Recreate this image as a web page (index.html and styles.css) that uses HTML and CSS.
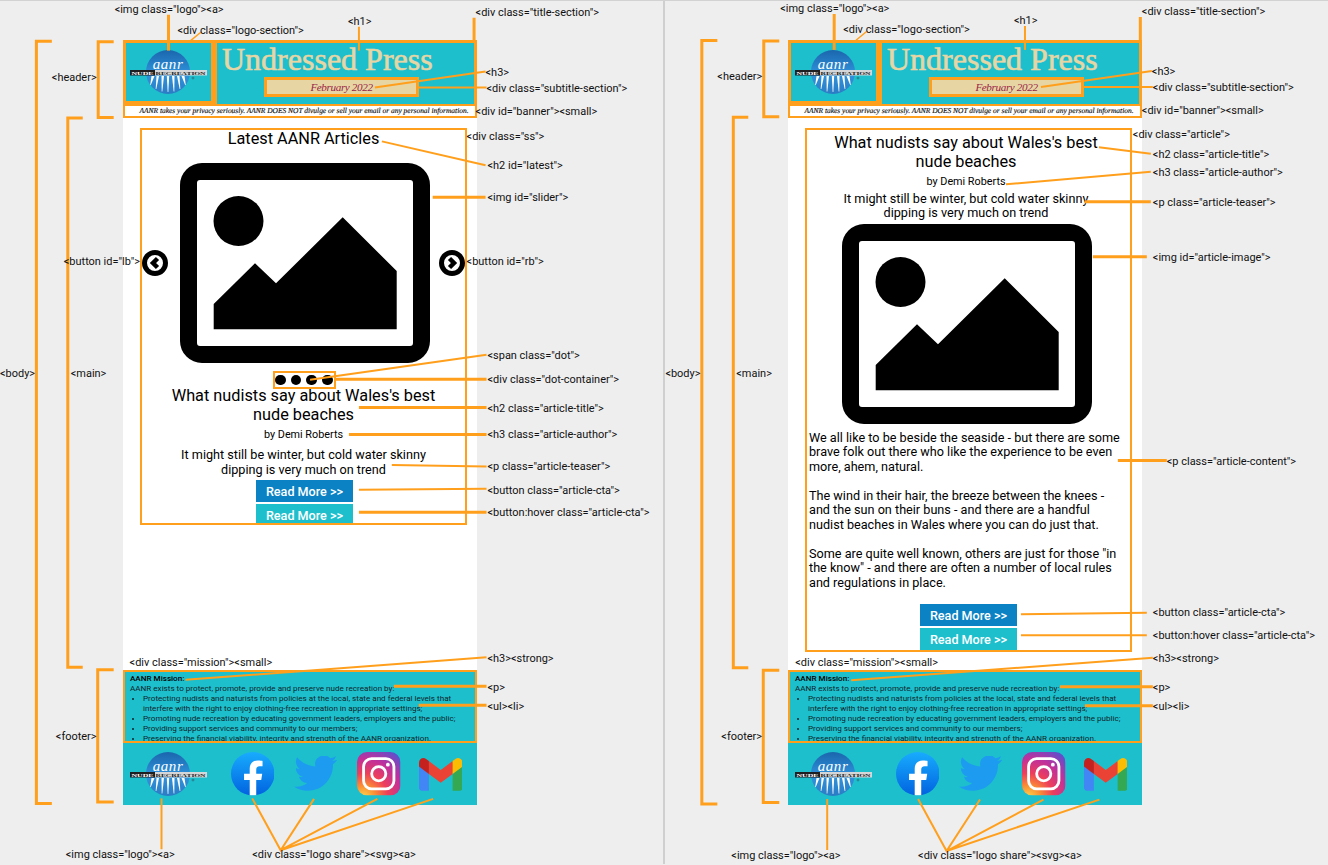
FILE: index.html
```html
<!DOCTYPE html>
<html lang="en">
<head>
<meta charset="utf-8">
<title>Undressed Press wireframes</title>
<link rel="stylesheet" href="styles.css">
</head>
<body>
<svg class="defs" aria-hidden="true">
  <defs>
    <linearGradient id="g-logo" x1="0" y1="0" x2="0" y2="1">
      <stop offset="0" stop-color="#1b66ad"/><stop offset=".55" stop-color="#2f93dc"/><stop offset="1" stop-color="#2a7cc4"/>
    </linearGradient>
    <linearGradient id="g-fb" x1="0" y1="0" x2="0" y2="1">
      <stop offset="0" stop-color="#18acfe"/><stop offset="1" stop-color="#0163e0"/>
    </linearGradient>
    <radialGradient id="g-ig" cx=".15" cy="1.05" r="1.25">
      <stop offset="0" stop-color="#fdd74e"/><stop offset=".22" stop-color="#fb8f34"/><stop offset=".45" stop-color="#ee3f5a"/><stop offset=".72" stop-color="#c0309c"/><stop offset="1" stop-color="#5b51cd"/>
    </radialGradient>
  </defs>
  <symbol id="i-photo" viewBox="0 0 250 200">
    <path fill-rule="evenodd" d="M22 0H228A22 22 0 0 1 250 22V178A22 22 0 0 1 228 200H22A22 22 0 0 1 0 178V22A22 22 0 0 1 22 0ZM20 17A3 3 0 0 0 17 20V180A3 3 0 0 0 20 183H230A3 3 0 0 0 233 180V20A3 3 0 0 0 230 17Z"/>
    <circle cx="58.5" cy="58" r="25"/>
    <path d="M33.700 141L75 100.300L96 120.300L162.700 54.300L216.700 108V166.300H33.700Z"/>
  </symbol>
  <symbol id="i-left" viewBox="0 0 26 26">
    <circle cx="13" cy="13" r="10.500" fill="#fff" stroke="#000" stroke-width="5"/>
    <path d="M15.500 8.500L11 13L15.500 17.500" fill="none" stroke="#000" stroke-width="4.500"/>
  </symbol>
  <symbol id="i-right" viewBox="0 0 26 26">
    <circle cx="13" cy="13" r="10.500" fill="#fff" stroke="#000" stroke-width="5"/>
    <path d="M10.500 8.500L15 13L10.500 17.500" fill="none" stroke="#000" stroke-width="4.500"/>
  </symbol>
  <symbol id="i-logo-art" viewBox="0 0 77 46">
    <circle cx="38" cy="23" r="22" fill="url(#g-logo)"/>
    <g fill="#fff">
      <path d="M36.800 27H39.200L38.300 43H37.700Z"/>
      <path d="M31.500 27H34L32.300 42.500H31.700Z"/>
      <path d="M42 27H44.500L44.300 42.500H43.700Z"/>
      <path d="M26.500 27H29L26.300 40H25.700Z"/>
      <path d="M47 27H49.500L50.300 40H49.700Z"/>
      <path d="M21.500 27H24.500L20.800 36H20.200Z"/>
      <path d="M51.500 27H54.500L55.800 36H55.200Z"/>
    </g>
    <rect x="0" y="21" width="25" height="5.500" fill="#1f1f22"/>
    <rect x="25" y="21" width="52" height="5.500" fill="#d4d6d8"/>
    <circle cx="63" cy="29" r="1" fill="none" stroke="#345" stroke-width=".5"/>
  </symbol>
  <symbol id="i-fb" viewBox="0 0 40 40">
    <circle cx="20" cy="20" r="20" fill="url(#g-fb)"/>
    <path fill="#fff" d="M27.800 25.800L28.700 20H23.200V16.300C23.200 14.700 24 13.200 26.400 13.200H29V8.200S26.700 7.800 24.600 7.800C20.100 7.800 17.200 10.500 17.200 15.400V20H12V25.800H17.200V39.800Q20 40.200 23.200 39.800V25.800Z"/>
  </symbol>
  <symbol id="i-tw" viewBox="0 0 24 20">
    <path fill="#1d9bf0" transform="translate(0 -2.500)" d="M23.953 4.570a10 10 0 0 1-2.825.775 4.958 4.958 0 0 0 2.163-2.723c-.951.555-2.005.959-3.127 1.184a4.920 4.920 0 0 0-8.384 4.482C7.690 8.095 4.067 6.130 1.640 3.162a4.822 4.822 0 0 0-.666 2.475c0 1.710.870 3.213 2.188 4.096a4.904 4.904 0 0 1-2.228-.616v.060a4.923 4.923 0 0 0 3.946 4.827 4.996 4.996 0 0 1-2.212.085 4.936 4.936 0 0 0 4.604 3.417 9.867 9.867 0 0 1-6.102 2.105c-.390 0-.779-.023-1.170-.067a13.995 13.995 0 0 0 7.557 2.209c9.053 0 13.998-7.496 13.998-13.985 0-.210 0-.420-.015-.630A9.935 9.935 0 0 0 24 4.590z"/>
  </symbol>
  <symbol id="i-ig" viewBox="0 0 43 43">
    <rect width="43" height="43" rx="10" fill="url(#g-ig)"/>
    <rect x="6.500" y="6.500" width="30" height="30" rx="8" fill="none" stroke="#fff" stroke-width="2.800"/>
    <circle cx="21.500" cy="21.500" r="7" fill="none" stroke="#fff" stroke-width="2.800"/>
    <circle cx="30.500" cy="12.500" r="1.900" fill="#fff"/>
  </symbol>
  <symbol id="i-gm" viewBox="0 0 256 193">
    <path fill="#4285F4" d="M58.182 192.050V93.140L27.507 65.077 0 49.504v125.091c0 9.658 7.825 17.455 17.455 17.455h40.727Z"/>
    <path fill="#34A853" d="M197.818 192.050h40.727c9.659 0 17.455-7.826 17.455-17.455V49.505l-31.156 17.837-27.026 25.798v98.910Z"/>
    <path fill="#EA4335" d="m58.182 93.140-4.174-38.647 4.174-36.989L128 69.868l69.818-52.364 4.669 34.992-4.669 40.644L128 145.504z"/>
    <path fill="#FBBC04" d="M197.818 17.504V93.140L256 49.504V26.231c0-21.585-24.640-33.890-41.890-20.945l-16.292 12.218Z"/>
    <path fill="#C5221F" d="m0 49.504 26.759 20.070L58.182 93.140V17.504L41.890 5.286C24.610-7.660 0 4.646 0 26.230v23.273Z"/>
  </symbol>
</svg>

<div class="stage">

  <section class="panel panel-first">
    <div class="page">
      <header class="site-header">
        <div class="top">
          <div class="logo-section">
            <svg class="logo" viewBox="0 0 77 46"><use href="#i-logo-art" width="77" height="46"/><text class="logo-word" x="38" y="19.500" text-anchor="middle">aanr</text><text class="logo-band logo-band-light" x="1.500" y="25.600" textLength="22" lengthAdjust="spacingAndGlyphs">NUDE</text><text class="logo-band" x="25.500" y="25.600" textLength="50" lengthAdjust="spacingAndGlyphs">RECREATION</text></svg>
          </div>
          <div class="title-section">
            <h1>Undressed Press</h1>
            <div class="subtitle-section"><h3>February 2022</h3></div>
          </div>
        </div>
        <div class="banner"><small>AANR takes your privacy seriously. AANR DOES NOT divulge or sell your email or any personal information.</small></div>
      </header>
      <main class="main">
        <div class="card card-ss">
          <h2 class="latest">Latest AANR Articles</h2>
          <div class="slider">
            <svg class="round-btn"><use href="#i-left"/></svg>
            <svg class="photo photo-slider"><use href="#i-photo"/></svg>
            <svg class="round-btn"><use href="#i-right"/></svg>
          </div>
          <div class="dot-row"><div class="dot-container"><span class="dot"></span><span class="dot"></span><span class="dot"></span><span class="dot"></span></div></div>
          <h2 class="article-title article-title-tight">What nudists say about Wales's best nude beaches</h2>
          <h3 class="article-author">by Demi Roberts</h3>
          <p class="article-teaser teaser-loose">It might still be winter, but cold water skinny dipping is very much on trend</p>
          <div class="cta-stack cta-stack-tight">
            <button class="article-cta">Read More &gt;&gt;</button>
            <button class="article-cta article-cta-hover">Read More &gt;&gt;</button>
          </div>
        </div>
      </main>
      <footer class="site-footer">
        <div class="mission">
          <h3><strong>AANR Mission:</strong></h3>
          <p>AANR exists to protect, promote, provide and preserve nude recreation by:</p>
          <ul>
            <li>Protecting nudists and naturists from policies at the local, state and federal levels that interfere with the right to enjoy clothing-free recreation in appropriate settings;</li>
            <li>Promoting nude recreation by educating government leaders, employers and the public;</li>
            <li>Providing support services and community to our members;</li>
            <li>Preserving the financial viability, integrity and strength of the AANR organization.</li>
          </ul>
        </div>
        <div class="share-row">
          <svg class="logo logo-foot" viewBox="0 0 77 46"><use href="#i-logo-art" width="77" height="46"/><text class="logo-word" x="38" y="19.500" text-anchor="middle">aanr</text><text class="logo-band logo-band-light" x="1.500" y="25.600" textLength="22" lengthAdjust="spacingAndGlyphs">NUDE</text><text class="logo-band" x="25.500" y="25.600" textLength="50" lengthAdjust="spacingAndGlyphs">RECREATION</text></svg>
          <svg class="share"><use href="#i-fb"/></svg>
          <svg class="share share-tw"><use href="#i-tw"/></svg>
          <svg class="share"><use href="#i-ig"/></svg>
          <svg class="share share-gm"><use href="#i-gm"/></svg>
        </div>
      </footer>
    </div>

    <svg class="notes" viewBox="0 0 665 865">
      <g class="br">
        <path d="M52 40.500H36.500V805H52"/>
        <path d="M83 117.500H68V668.500H83"/>
        <path d="M114 41H98.500V117H114"/>
        <path d="M114 671H98V803.500H114"/>
      </g>
      <g class="ln">
        <path d="M169 14V50"/>
        <path class="thin" d="M190 41L202 31"/>
        <path class="mid" d="M360 26V50"/>
        <path d="M475.500 17V41"/>
        <path class="mid" d="M376 87L487 71"/>
        <path class="mid" d="M419 87H488"/>
        <path class="mid" d="M383 141L487 165"/>
        <path d="M434 197H487"/>
        <path class="mid" d="M311 380L488 355"/>
        <path d="M336 379.500H488"/>
        <path d="M360 408H488"/>
        <path d="M350 435H488"/>
        <path class="mid" d="M393 465.700L488 467"/>
        <path class="mid" d="M360 490.500L488 489.500"/>
        <path d="M360 513H488"/>
        <path class="mid" d="M186 681L488 658.500"/>
        <path d="M395 687.500H488"/>
        <path d="M420 706.500H488"/>
        <path class="mid" d="M162 800V851"/>
        <path class="mid" d="M253 800L281.500 852L315 800.500M281.500 852L378.500 800.500M281.500 852L434.500 800.500"/>
      </g>
      <g class="tx">
        <text x="115" y="8">&lt;img class="logo"&gt;&lt;a&gt;</text>
        <text x="178" y="29">&lt;div class="logo-section"&gt;</text>
        <text x="349" y="20">&lt;h1&gt;</text>
        <text x="477" y="11">&lt;div class="title-section"&gt;</text>
        <text x="52" y="76">&lt;header&gt;</text>
        <text x="487" y="71">&lt;h3&gt;</text>
        <text x="488" y="87">&lt;div class="subtitle-section"&gt;</text>
        <text x="477" y="110">&lt;div id="banner"&gt;&lt;small&gt;</text>
        <text x="468" y="135">&lt;div class="ss"&gt;</text>
        <text x="489" y="165">&lt;h2 id="latest"&gt;</text>
        <text x="489" y="197">&lt;img id="slider"&gt;</text>
        <text x="64" y="261">&lt;button id="lb"&gt;</text>
        <text x="468" y="261">&lt;button id="rb"&gt;</text>
        <text x="489" y="355">&lt;span class="dot"&gt;</text>
        <text x="489" y="379">&lt;div class="dot-container"&gt;</text>
        <text x="489" y="408">&lt;h2 class="article-title"&gt;</text>
        <text x="489" y="434">&lt;h3 class="article-author"&gt;</text>
        <text x="489" y="466">&lt;p class="article-teaser"&gt;</text>
        <text x="489" y="490">&lt;button class="article-cta"&gt;</text>
        <text x="489" y="513">&lt;button:hover class="article-cta"&gt;</text>
        <text x="0" y="373">&lt;body&gt;</text>
        <text x="71" y="373">&lt;main&gt;</text>
        <text x="56" y="737">&lt;footer&gt;</text>
        <text x="130" y="663">&lt;div class="mission"&gt;&lt;small&gt;</text>
        <text x="489" y="659">&lt;h3&gt;&lt;strong&gt;</text>
        <text x="489" y="688">&lt;p&gt;</text>
        <text x="489" y="707">&lt;ul&gt;&lt;li&gt;</text>
        <text x="66" y="856">&lt;img class="logo"&gt;&lt;a&gt;</text>
        <text x="253" y="856">&lt;div class="logo share"&gt;&lt;svg&gt;&lt;a&gt;</text>
      </g>
    </svg>
  </section>

  <section class="panel">
    <div class="page">
      <header class="site-header">
        <div class="top">
          <div class="logo-section">
            <svg class="logo" viewBox="0 0 77 46"><use href="#i-logo-art" width="77" height="46"/><text class="logo-word" x="38" y="19.500" text-anchor="middle">aanr</text><text class="logo-band logo-band-light" x="1.500" y="25.600" textLength="22" lengthAdjust="spacingAndGlyphs">NUDE</text><text class="logo-band" x="25.500" y="25.600" textLength="50" lengthAdjust="spacingAndGlyphs">RECREATION</text></svg>
          </div>
          <div class="title-section">
            <h1>Undressed Press</h1>
            <div class="subtitle-section"><h3>February 2022</h3></div>
          </div>
        </div>
        <div class="banner"><small>AANR takes your privacy seriously. AANR DOES NOT divulge or sell your email or any personal information.</small></div>
      </header>
      <main class="main">
        <div class="card">
          <h2 class="article-title article-title-top">What nudists say about Wales's best nude beaches</h2>
          <h3 class="article-author author-top">by Demi Roberts</h3>
          <p class="article-teaser teaser-close">It might still be winter, but cold water skinny dipping is very much on trend</p>
          <svg class="photo photo-article"><use href="#i-photo"/></svg>
          <div class="article-content">
            <p>We all like to be beside the seaside - but there are some brave folk out there who like the experience to be even more, ahem, natural.</p>
            <p>The wind in their hair, the breeze between the knees - and the sun on their buns - and there are a handful nudist beaches in Wales where you can do just that.</p>
            <p>Some are quite well known, others are just for those "in the know" - and there are often a number of local rules and regulations in place.</p>
          </div>
          <div class="cta-stack cta-stack-wide">
            <button class="article-cta">Read More &gt;&gt;</button>
            <button class="article-cta article-cta-hover">Read More &gt;&gt;</button>
          </div>
        </div>
      </main>
      <footer class="site-footer">
        <div class="mission">
          <h3><strong>AANR Mission:</strong></h3>
          <p>AANR exists to protect, promote, provide and preserve nude recreation by:</p>
          <ul>
            <li>Protecting nudists and naturists from policies at the local, state and federal levels that interfere with the right to enjoy clothing-free recreation in appropriate settings;</li>
            <li>Promoting nude recreation by educating government leaders, employers and the public;</li>
            <li>Providing support services and community to our members;</li>
            <li>Preserving the financial viability, integrity and strength of the AANR organization.</li>
          </ul>
        </div>
        <div class="share-row">
          <svg class="logo logo-foot" viewBox="0 0 77 46"><use href="#i-logo-art" width="77" height="46"/><text class="logo-word" x="38" y="19.500" text-anchor="middle">aanr</text><text class="logo-band logo-band-light" x="1.500" y="25.600" textLength="22" lengthAdjust="spacingAndGlyphs">NUDE</text><text class="logo-band" x="25.500" y="25.600" textLength="50" lengthAdjust="spacingAndGlyphs">RECREATION</text></svg>
          <svg class="share"><use href="#i-fb"/></svg>
          <svg class="share share-tw"><use href="#i-tw"/></svg>
          <svg class="share"><use href="#i-ig"/></svg>
          <svg class="share share-gm"><use href="#i-gm"/></svg>
        </div>
      </footer>
    </div>

    <svg class="notes" viewBox="0 0 663 865">
      <g class="br">
        <path d="M52 40.500H36.500V805H52"/>
        <path d="M83 117.500H68V668.500H83"/>
        <path d="M114 41H98.500V117H114"/>
        <path d="M114 671H98V803.500H114"/>
      </g>
      <g class="ln">
        <path d="M169 14V50"/>
        <path class="thin" d="M190 41L202 31"/>
        <path class="mid" d="M360 26V50"/>
        <path d="M475.500 17V41"/>
        <path class="mid" d="M376 87L487 71"/>
        <path class="mid" d="M419 87H488"/>
        <path class="mid" d="M434 147.500L486 154"/>
        <path class="mid" d="M341 184.500L486 172"/>
        <path d="M420 202H486"/>
        <path d="M428 257H482"/>
        <path d="M453 461H502"/>
        <path class="mid" d="M356 615L482 613.500"/>
        <path class="mid" d="M356 636H482"/>
        <path class="mid" d="M186 681L488 658.500"/>
        <path d="M395 687.500H488"/>
        <path d="M420 706.500H488"/>
        <path class="mid" d="M162 800V851"/>
        <path class="mid" d="M253 800L281.500 852L315 800.500M281.500 852L378.500 800.500M281.500 852L434.500 800.500"/>
      </g>
      <g class="tx">
        <text x="115" y="8">&lt;img class="logo"&gt;&lt;a&gt;</text>
        <text x="178" y="29">&lt;div class="logo-section"&gt;</text>
        <text x="349" y="20">&lt;h1&gt;</text>
        <text x="477" y="11">&lt;div class="title-section"&gt;</text>
        <text x="52" y="76">&lt;header&gt;</text>
        <text x="487" y="71">&lt;h3&gt;</text>
        <text x="488" y="87">&lt;div class="subtitle-section"&gt;</text>
        <text x="477" y="110">&lt;div id="banner"&gt;&lt;small&gt;</text>
        <text x="468" y="134">&lt;div class="article"&gt;</text>
        <text x="488" y="154">&lt;h2 class="article-title"&gt;</text>
        <text x="488" y="172">&lt;h3 class="article-author"&gt;</text>
        <text x="488" y="202">&lt;p class="article-teaser"&gt;</text>
        <text x="488" y="257">&lt;img id="article-image"&gt;</text>
        <text x="502" y="461">&lt;p class="article-content"&gt;</text>
        <text x="488" y="613">&lt;button class="article-cta"&gt;</text>
        <text x="488" y="636">&lt;button:hover class="article-cta"&gt;</text>
        <text x="0" y="373">&lt;body&gt;</text>
        <text x="71" y="373">&lt;main&gt;</text>
        <text x="56" y="737">&lt;footer&gt;</text>
        <text x="130" y="663">&lt;div class="mission"&gt;&lt;small&gt;</text>
        <text x="488" y="659">&lt;h3&gt;&lt;strong&gt;</text>
        <text x="488" y="688">&lt;p&gt;</text>
        <text x="488" y="707">&lt;ul&gt;&lt;li&gt;</text>
        <text x="66" y="856">&lt;img class="logo"&gt;&lt;a&gt;</text>
        <text x="253" y="856">&lt;div class="logo share"&gt;&lt;svg&gt;&lt;a&gt;</text>
      </g>
    </svg>
  </section>

</div>
</body>
</html>
```
FILE: styles.css
```css
* { box-sizing: border-box; }
html, body { margin: 0; padding: 0; }
body { background: #eeeeee; font-family: Roboto, "Liberation Sans", sans-serif; color: #000; overflow: hidden; }
.defs { position: absolute; width: 0; height: 0; }
.stage { display: flex; width: 1328px; height: 865px; border-top: 2px solid #d2d2d2; margin-top: -1px; }
.panel { position: relative; width: 663px; height: 864px; padding: 39px 0 0 123px; }
.panel-first { width: 665px; border-right: 2px solid #cfcfcf; }
.page { width: 354px; display: flex; flex-direction: column; }

.top { display: flex; height: 64px; }
.logo-section { width: 91px; background: #1dbfcd; border: 3px solid #ff9f1c; display: flex; align-items: center; justify-content: center; }
.logo { width: 77px; height: 46px; flex: none; display: block; }
.title-section { flex: 1; background: #1dbfcd; border: 3px solid #ff9f1c; border-bottom: 0; padding-left: 5px; display: flex; flex-direction: column; position: relative; }
.title-section h1 { margin: -1px 0 1px; font: 400 32px/34px "Liberation Serif", serif; color: #e7d6a4; -webkit-text-stroke: .6px #e7d6a4; white-space: nowrap; }
.subtitle-section { width: 155px; height: 20px; margin: 0 0 0 42px; background: #e7d6a4; border: 3px solid #ff9f1c; display: flex; align-items: center; justify-content: center; }
.subtitle-section h3 { margin: 0; font: italic 400 11.200px/14px "Liberation Serif", serif; letter-spacing: -.4px; color: #9a2447; }
.banner { height: 14px; background: #fff; border: 2px solid #ff9f1c; text-align: center; }
.banner small { display: block; font: italic 400 7.450px/10px "Liberation Serif", serif; color: #111; -webkit-text-stroke: .15px #111; text-rendering: geometricPrecision; white-space: nowrap; padding-left: 8px; }

.main { height: 552px; background: #fff; padding: 10px 0 0 17px; }
.card { width: 327px; border: 2px solid #ff9f1c; background: #fff; text-align: center; overflow: hidden; }
.card-ss { height: 397px; }
.card h2, .card h3, .card p { margin: 0; font-weight: 400; }
.card h2 { font-size: 16.300px; line-height: 19px; }
.card .latest { line-height: 17px; }
.slider { display: flex; align-items: center; margin-top: 16px; }
.round-btn { width: 26px; height: 26px; flex: none; display: block; }
.photo { width: 250px; height: 200px; flex: none; display: block; }
.photo-slider { margin: 0 9px 0 12px; }
.photo-article { margin: 3px 0 0 35px; }
.dot-row { margin-top: 8px; height: 18px; display: flex; justify-content: center; }
.dot-container { display: flex; align-items: center; gap: 5.200px; width: 63px; height: 18px; padding-left: .5px; border: 2px solid #ff9f1c; margin-left: 1px; }
.dot { display: block; width: 10.500px; height: 10.500px; border-radius: 50%; background: #000; flex: none; }
.article-title { padding: 0 24px; }
.article-title-tight { margin-top: -3px !important; }
.article-title-top { margin-top: 3px !important; padding-right: 29px; }
.article-author { margin-top: 4px !important; font-size: 10.800px; line-height: 14px; }
.author-top { padding-right: 5px; }
.article-teaser { font-size: 12.650px; line-height: 14.500px; padding: 0 30px; }
.teaser-loose { margin-top: 6px !important; }
.teaser-close { margin-top: 2.500px !important; padding-right: 35px; }
.article-content { margin-top: 7px; padding: 0 4px 0 2px; text-align: left; font-size: 12.650px; line-height: 14.500px; }
.article-content p { margin-bottom: 14.500px; }
.article-content p:last-child { margin-bottom: 0; }
.cta-stack { display: flex; flex-direction: column; align-items: center; gap: 2px; }
.cta-stack-tight { margin-top: 3px; padding-left: 2px; }
.cta-stack-wide { margin-top: 13.500px; }
.article-cta { width: 97px; height: 22px; border: 0; padding: 1px 0 0; background: #0a82c4; color: #fff; font: 500 12.600px/21px Roboto, sans-serif; }
.article-cta-hover { background: #1dbfcd; }

.site-footer { display: flex; flex-direction: column; }
.mission { height: 73px; background: #1dbfcd; border: 2px solid #ff9f1c; padding: 1px 10px 0 5px; overflow: hidden; font-size: 8.100px; line-height: 10px; color: #10262b; }
.mission h3, .mission p, .mission ul { margin: 0; font-size: inherit; font-weight: 400; }
.mission strong { font-weight: 500; color: #000; }
.mission ul { padding-left: 13px; }
.mission li::marker { font-size: 6px; }
.share-row { height: 62px; background: #1dbfcd; display: flex; align-items: center; gap: 19.700px; padding-left: 7px; }
.logo-foot { margin-right: 4px; }
.share { width: 43.500px; height: 43.500px; flex: none; display: block; }
.share-tw { height: 36px; }
.share-gm { height: 33px; margin-left: -1.500px; }
.logo-word { font: italic 400 15px "Liberation Serif", serif; fill: #fff; letter-spacing: .6px; }
.logo-band { font: 700 4.500px "Liberation Serif", serif; fill: #222; }
.logo-band-light { fill: #fff; }

.notes { position: absolute; left: 0; top: -1px; width: 100%; height: 100%; pointer-events: none; overflow: visible; }
.br path { fill: none; stroke: #ff9f1c; stroke-width: 3; }
.ln path { fill: none; stroke: #ff9f1c; stroke-width: 3; }
.ln .mid { stroke-width: 2; }
.ln .thin { stroke-width: 1.500; }
.tx { transform: translateY(.7px); }
.tx text { font: 400 11px Roboto, sans-serif; fill: #111; dominant-baseline: central; }
```
